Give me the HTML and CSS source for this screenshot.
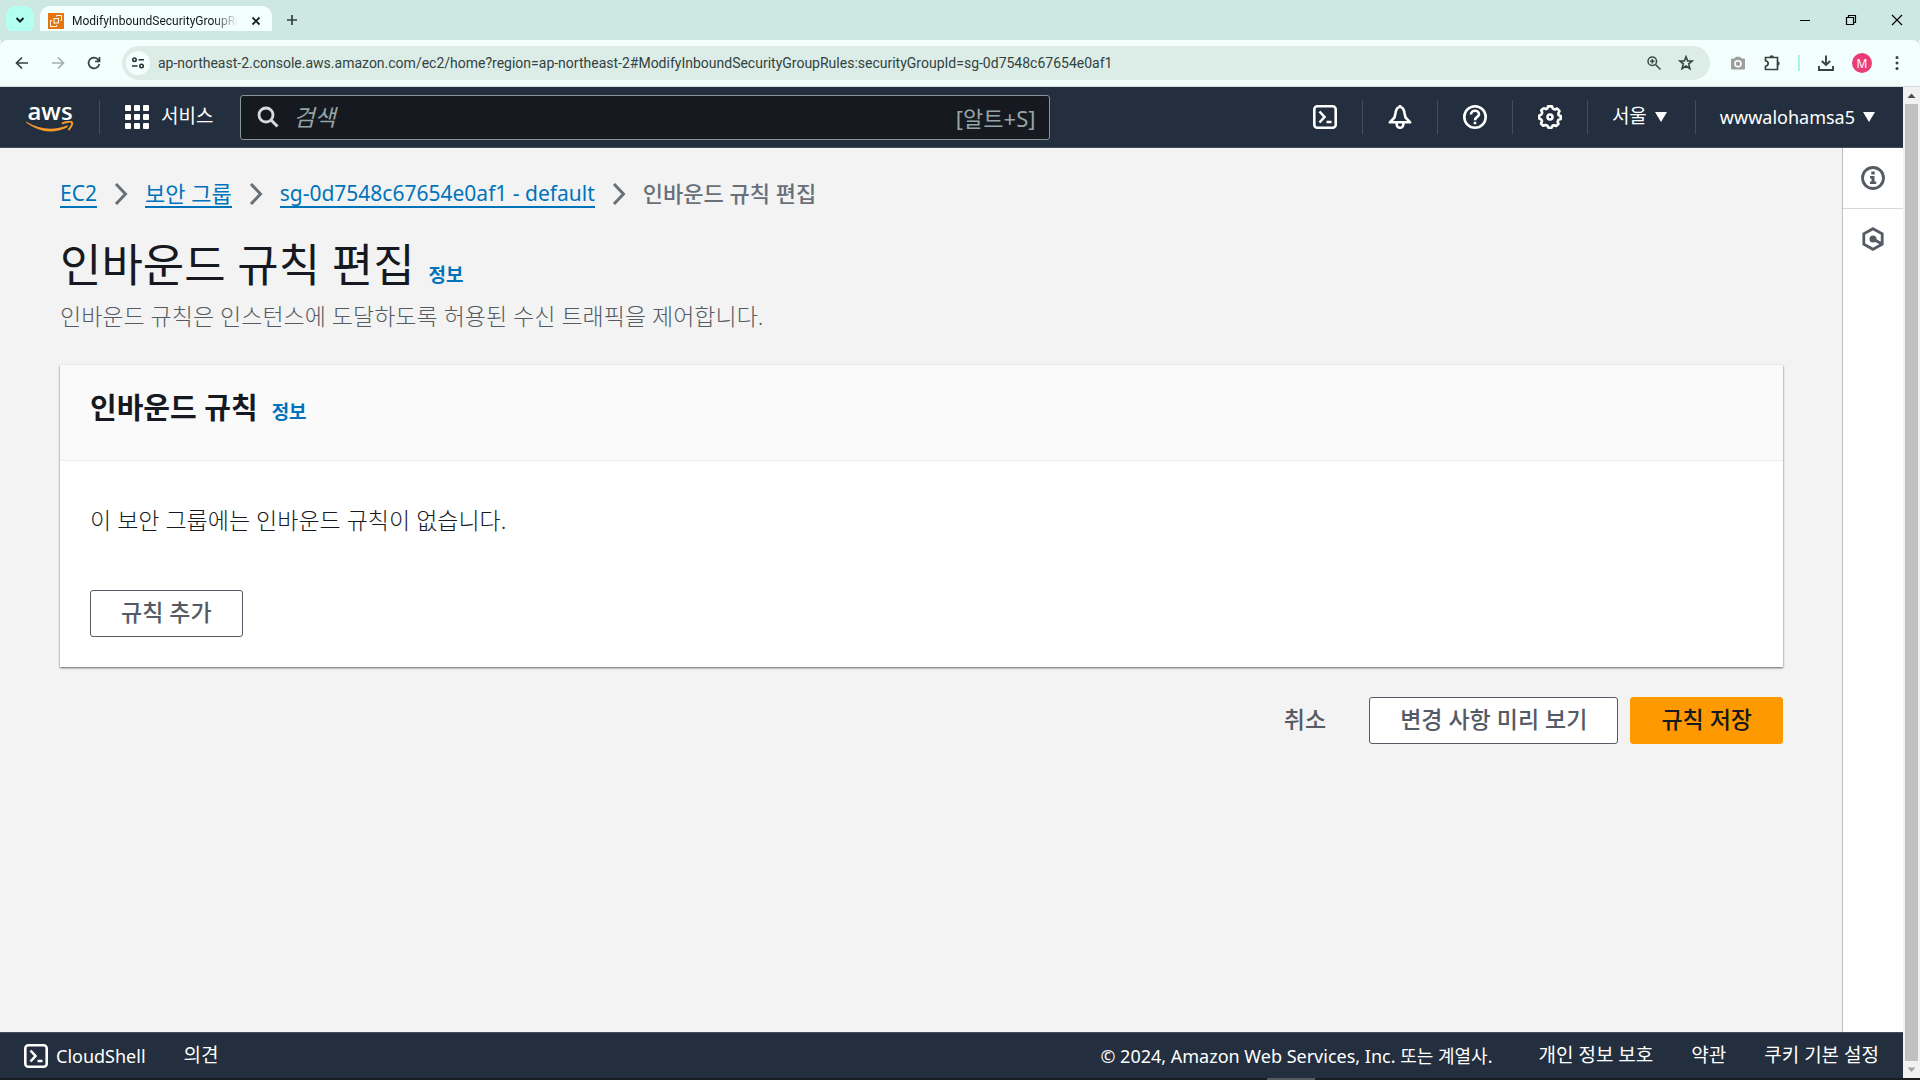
FILE: index.html
```html
<!DOCTYPE html>
<html lang="ko">
<head>
    <meta charset="UTF-8">
    <meta name="viewport" content="width=device-width, initial-scale=1.0">
    <title>ModifyInboundSecurityGroupRules</title>
    <link rel="stylesheet" href="styles.css">
</head>
<body>

    <!-- Browser tabs -->
    <div class="tab-strip">
        <button class="tab-search" aria-label="Search tabs">
            <svg width="10" height="10" viewBox="0 0 10 10"><path d="M1.5 3 5 6.5 8.500 3" fill="none" stroke="#14221f" stroke-width="2"/></svg>
        </button>
        <div class="tab">
            <svg width="16" height="16" viewBox="0 0 16 16">
                <rect width="16" height="16" fill="#e8740c"/>
                <g fill="none" stroke="#fff">
                    <rect x="6" y="5.500" width="4.500" height="4.500"/>
                    <path d="M8.500 3.500V2.500H13.500V7.500H12.500M4 7.500H2.500V13.500H8.500V12"/>
                </g>
            </svg>
            <span class="tab-title">ModifyInboundSecurityGroupRules</span>
            <button class="tab-close" aria-label="Close tab">
                <svg width="10" height="10" viewBox="0 0 10 10"><path d="M1.500 1.500 8.500 8.500M8.500 1.500 1.500 8.500" stroke="#14221f" stroke-width="1.800"/></svg>
            </button>
        </div>
        <button class="new-tab" aria-label="New tab">
            <svg width="12" height="12" viewBox="0 0 12 12"><path d="M6 1V11M1 6H11" stroke="#2f403c" stroke-width="1.700"/></svg>
        </button>
        <div class="window-buttons">
            <button aria-label="Minimize"><svg width="12" height="12" viewBox="0 0 12 12"><path d="M1 6.500H11" stroke="#000"/></svg></button>
            <button aria-label="Restore"><svg width="12" height="12" viewBox="0 0 12 12"><path d="M1.500 3.500H8.500V10.500H1.500ZM3.500 3.500V1.500H10.500V8.500H8.500" fill="none" stroke="#000" stroke-width="1.200"/></svg></button>
            <button aria-label="Close"><svg width="12" height="12" viewBox="0 0 12 12"><path d="M1 1 11 11M11 1 1 11" stroke="#000" stroke-width="1.200"/></svg></button>
        </div>
    </div>

    <!-- Browser toolbar -->
    <div class="toolbar">
        <button aria-label="Back"><svg width="16" height="16" viewBox="0 0 16 16"><path d="M14 8H3M8 2.500 2.500 8 8 13.500" fill="none" stroke="#34433f" stroke-width="1.700"/></svg></button>
        <button aria-label="Forward"><svg width="16" height="16" viewBox="0 0 16 16"><path d="M2 8H13M8 2.500 13.500 8 8 13.500" fill="none" stroke="#a3b0ac" stroke-width="1.700"/></svg></button>
        <button aria-label="Reload"><svg width="16" height="16" viewBox="0 0 16 16"><path d="M13.300 9A5.400 5.400 0 1 1 12.300 4.700L13.300 6M13.500 2V6.300H9.200" fill="none" stroke="#34433f" stroke-width="1.700"/></svg></button>
        <div class="address">
            <button class="site-info" aria-label="Site information">
                <svg width="14" height="14" viewBox="0 0 14 14"><g fill="none" stroke="#25322f" stroke-width="1.600"><circle cx="3.500" cy="3.700" r="1.700"/><path d="M7.500 3.700H13M1 10H6.500"/><circle cx="10.500" cy="10" r="1.700"/></g></svg>
            </button>
            <input class="url" type="text" aria-label="Address" value="ap-northeast-2.console.aws.amazon.com/ec2/home?region=ap-northeast-2#ModifyInboundSecurityGroupRules:securityGroupId=sg-0d7548c67654e0af1">
            <button aria-label="Zoom"><svg width="16" height="16" viewBox="0 0 16 16"><g fill="none" stroke="#3c4b47" stroke-width="1.500"><circle cx="6.300" cy="6.300" r="4.300"/><path d="M9.500 9.500 14.500 14.500M4 6.300H8.600M6.300 4V8.600"/></g></svg></button>
            <button aria-label="Bookmark"><svg width="16" height="16" viewBox="0 0 16 16"><path d="M8 1.800 9.700 6H14.200L10.700 8.900 11.900 13.600 8 11 4.100 13.600 5.300 8.900 1.800 6H6.300Z" fill="none" stroke="#34433f" stroke-width="1.600"/></svg></button>
        </div>
        <div class="toolbar-right">
            <button aria-label="Screenshot"><svg width="16" height="16" viewBox="0 0 16 16"><path d="M1 4.500Q1 3.500 2 3.500H4.200L6 1.700H10L11.800 3.500H14Q15 3.500 15 4.500V13.500Q15 14.500 14 14.500H2Q1 14.500 1 13.500Z" fill="#9b9f9e"/><circle cx="8" cy="8.700" r="3" fill="none" stroke="#fff" stroke-width="1.600"/></svg></button>
            <button aria-label="Extensions"><svg width="18" height="18" viewBox="0 0 18 18"><path d="M2.500 3.500H14.500V15.500H2.500V12.200Q5.200 11.500 5.200 9.500T2.500 6.800Z" fill="none" stroke="#34433f" stroke-width="1.700"/><path d="M6.500 3.500a2.200 2.200 0 0 1 4.400 0ZM14.500 7.300a2.200 2.200 0 0 1 0 4.400Z" fill="#34433f"/></svg></button>
            <span class="divider-mint"></span>
            <button aria-label="Downloads"><svg width="18" height="18" viewBox="0 0 18 18"><path d="M9 1.500V10.500M4.800 7 9 11 13.200 7M2 12V16H16V12" fill="none" stroke="#34433f" stroke-width="1.900"/></svg></button>
            <button class="avatar" aria-label="Profile">M</button>
            <button aria-label="Menu"><svg width="16" height="16" viewBox="0 0 16 16" fill="#34433f"><circle cx="8" cy="2.500" r="1.500"/><circle cx="8" cy="8" r="1.500"/><circle cx="8" cy="13.500" r="1.500"/></svg></button>
        </div>
    </div>

    <div class="viewport">
        <div class="page">

            <header class="aws-header">
                <a class="aws-logo" href="#" aria-label="AWS">
                    <span class="aws-word">aws</span>
                    <svg width="48" height="12" viewBox="0 0 48 12"><path d="M0 .5Q21 13 42 4L41 6.500Q20 16.500 0 1.500Z" fill="#f79a28"/><path d="M36 2.500Q45-.5 46 1.500T42.500 9" fill="none" stroke="#f79a28" stroke-width="2"/></svg>
                </a>
                <button class="services">
                    <svg width="24" height="24" viewBox="0 0 24 24" fill="#fff"><rect width="6" height="6" rx="1"/><rect x="9" width="6" height="6" rx="1"/><rect x="18" width="6" height="6" rx="1"/><rect y="9" width="6" height="6" rx="1"/><rect x="9" y="9" width="6" height="6" rx="1"/><rect x="18" y="9" width="6" height="6" rx="1"/><rect y="18" width="6" height="6" rx="1"/><rect x="9" y="18" width="6" height="6" rx="1"/><rect x="18" y="18" width="6" height="6" rx="1"/></svg>
                    <span class="ko">서비스</span>
                </button>
                <div class="search">
                    <svg width="22" height="22" viewBox="0 0 22 22"><circle cx="9" cy="9" r="7" fill="none" stroke="#d5dbdb" stroke-width="2.800"/><path d="M14 14 20.500 20.500" stroke="#d5dbdb" stroke-width="3"/></svg>
                    <input class="search-input" type="search" placeholder="검색" aria-label="검색">
                    <span class="shortcut">[알트+S]</span>
                </div>
                <nav class="header-tools">
                    <button aria-label="CloudShell"><svg width="24" height="24" viewBox="0 0 24 24" fill="none" stroke="#fff" stroke-width="2.600"><rect x="1.300" y="1.300" width="21.400" height="21.400" rx="3"/><path d="M6.500 6.500 11.500 12 6.500 17.500M13.500 17H18.500"/></svg></button>
                    <button aria-label="알림"><svg width="24" height="24" viewBox="0 0 24 24" fill="none" stroke="#fff" stroke-width="2.600" stroke-linejoin="round"><path d="M12 2C9 2 8 5 7.500 8L6.500 12.500 1.800 17.300H22.200L17.500 12.500 16.500 8C16 5 15 2 12 2ZM12 0V2M8.700 18V19.500A3.300 3.300 0 0 0 15.300 19.500V18"/></svg></button>
                    <button aria-label="도움말"><svg width="24" height="24" viewBox="0 0 24 24" fill="none" stroke="#fff" stroke-width="2.600"><circle cx="12" cy="12" r="10.700"/><path d="M8 9.500C8 4.500 16 4.700 16 9.300 16 12 12 11.800 12 15.200M12 16.700V19.300"/></svg></button>
                    <button aria-label="설정"><svg width="24" height="24" viewBox="0 0 24 24" fill="none" stroke="#fff" stroke-width="2.600" stroke-linejoin="round"><path d="M10 1.400H14L14.800 3.600 17 4.500 19.200 3.500 21.500 6.200 20.300 8.500 20.600 10.200 22.700 11V14L20.500 14.800 19.600 16.800 20.500 19 18 21 15.800 20.200 14.500 20.800 13.600 22.700H10.400L9.500 20.800 7.500 20 5.200 20.800 3 18.500 4 16.300 3.400 14.700 1.300 13.600V10.400L3.400 9.600 4.200 7.500 3.200 5.300 5.800 3.200 7.800 4.200 9.200 3.500Z"/><circle cx="12" cy="12" r="2.500"/></svg></button>
                    <button class="menu-button"><span class="ko">서울</span> <svg width="12" height="10" viewBox="0 0 12 10"><path d="M0 0H12L6 10Z" fill="#fff"/></svg></button>
                    <button class="menu-button">wwwalohamsa5 <svg width="12" height="10" viewBox="0 0 12 10"><path d="M0 0H12L6 10Z" fill="#fff"/></svg></button>
                </nav>
            </header>

            <div class="layout">
                <main class="content">
                    <nav class="breadcrumb">
                        <a href="#">EC2</a>
                        <svg width="14" height="24" viewBox="0 0 14 24"><path d="M2 2 11.500 12 2 22" fill="none" stroke="#687078" stroke-width="3"/></svg>
                        <a class="group" href="#">보안 그룹</a>
                        <svg width="14" height="24" viewBox="0 0 14 24"><path d="M2 2 11.500 12 2 22" fill="none" stroke="#687078" stroke-width="3"/></svg>
                        <a href="#">sg-0d7548c67654e0af1 - default</a>
                        <svg width="14" height="24" viewBox="0 0 14 24"><path d="M2 2 11.500 12 2 22" fill="none" stroke="#687078" stroke-width="3"/></svg>
                        <span class="current">인바운드 규칙 편집</span>
                    </nav>

                    <div class="title-row">
                        <h1>인바운드 규칙 편집</h1>
                        <a class="info" href="#">정보</a>
                    </div>
                    <p class="description">인바운드 규칙은 인스턴스에 도달하도록 허용된 수신 트래픽을 제어합니다.</p>

                    <section class="card">
                        <div class="card-header">
                            <h2>인바운드 규칙</h2>
                            <a class="info" href="#">정보</a>
                        </div>
                        <div class="card-body">
                            <p>이 보안 그룹에는 인바운드 규칙이 없습니다.</p>
                            <button class="btn">규칙 추가</button>
                        </div>
                    </section>

                    <div class="actions">
                        <button class="btn btn-link">취소</button>
                        <button class="btn">변경 사항 미리 보기</button>
                        <button class="btn btn-primary">규칙 저장</button>
                    </div>
                </main>

                <aside class="side-panel">
                    <button aria-label="정보"><svg width="24" height="24" viewBox="0 0 24 24"><circle cx="12" cy="12" r="10.500" fill="none" stroke="#545b64" stroke-width="2.800"/><path d="M10.300 5.500H13.700V8.500H10.300ZM9 10H13.500V15.500H15.200V18H9V15.500H10.500V12.500H9Z" fill="#545b64"/></svg></button>
                    <button aria-label="튜토리얼"><svg width="24" height="24" viewBox="0 0 24 24"><path d="M12 1.700 21.200 6.800V17.200L12 22.300 2.800 17.200V6.800Z" fill="none" stroke="#545b64" stroke-width="2.800"/><circle cx="12" cy="12" r="3.500" fill="#545b64"/><path d="M12 12 20.500 16.800" stroke="#545b64" stroke-width="3"/></svg></button>
                </aside>
            </div>

            <footer class="aws-footer">
                <button class="cloudshell">
                    <svg width="24" height="24" viewBox="0 0 24 24" fill="none" stroke="#fff" stroke-width="2.600"><rect x="1.300" y="1.300" width="21.400" height="21.400" rx="3"/><path d="M6.500 6.500 11.500 12 6.500 17.500M13.500 17H18.500"/></svg>
                    CloudShell
                </button>
                <a class="ko" href="#">의견</a>
                <span class="copyright">© 2024, Amazon Web Services, Inc. 또는 계열사.</span>
                <a class="ko" href="#">개인 정보 보호</a>
                <a class="ko" href="#">약관</a>
                <a class="ko" href="#">쿠키 기본 설정</a>
            </footer>
        </div>

        <div class="scrollbar">
            <svg width="17" height="17" viewBox="0 0 17 17"><path d="M4.500 11 8.500 6.500 12.500 11Z" fill="#505050"/></svg>
            <div class="thumb"></div>
            <svg width="17" height="17" viewBox="0 0 17 17"><path d="M4.500 6.500 8.500 11 12.500 6.500Z" fill="#a3a3a3"/></svg>
        </div>
    </div>

    <div class="taskbar"><span class="taskbar-item"></span></div>

</body>
</html>
```
FILE: styles.css
```css
* {
    box-sizing: border-box;
}
body {
    margin: 0;
    min-height: 100vh;
    display: flex;
    flex-direction: column;
    font-family: "Noto Sans", "Noto Sans CJK KR", sans-serif;
    font-size: 18px;
    color: #16191f;
    background: #f3f3f3;
}
button,
input {
    font: inherit;
    color: inherit;
    border: none;
    background: none;
    padding: 0;
}
button {
    cursor: pointer;
    display: flex;
    align-items: center;
    justify-content: center;
}
svg {
    display: block;
    flex: none;
}
a {
    color: #0073bb;
    text-decoration: none;
}
h1,
h2,
p {
    margin: 0;
}
/* Hangul sits a little above the Latin text beside it */
.ko {
    padding-bottom: 4px;
    font-size: 19px;
}

/* Browser tabs */
.tab-strip {
    display: flex;
    align-items: flex-end;
    height: 40px;
    padding-left: 6px;
    background: #cde8e1;
}
.tab-search {
    width: 28px;
    height: 28px;
    margin-bottom: 6px;
    border-radius: 10px;
    background: #b3fff0;
}
.tab {
    display: flex;
    align-items: center;
    width: 232px;
    height: 34px;
    margin-left: 6px;
    padding: 0 10px 4px 8px;
    border-radius: 10px 10px 0 0;
    background: #f3fffc;
}
.tab-title {
    flex: 1;
    margin-left: 8px;
    overflow: hidden;
    white-space: nowrap;
    font-family: Roboto, sans-serif;
    font-size: 12px;
    -webkit-mask-image: linear-gradient(to right, #000 85%, transparent);
    mask-image: linear-gradient(to right, #000 85%, transparent);
}
.tab-close {
    width: 12px;
    margin-left: 12px;
}
.new-tab {
    width: 28px;
    height: 28px;
    margin: 0 0 6px 6px;
}
.window-buttons {
    display: flex;
    height: 40px;
    margin-left: auto;
}
.window-buttons button {
    width: 46px;
}

/* Browser toolbar */
.toolbar {
    display: flex;
    align-items: center;
    gap: 20px;
    height: 47px;
    padding: 0 15px 0 14px;
    border-bottom: 1px solid #cfdedb;
    border-radius: 8px 8px 0 0;
    background: #f3fffc;
    box-shadow: 0 -10px 0 -1px #cde8e1;
}
.address {
    flex: 1;
    display: flex;
    align-items: center;
    gap: 16px;
    height: 34px;
    padding: 0 16px 0 4px;
    border-radius: 17px;
    background: #dcede8;
}
.site-info {
    width: 24px;
    height: 24px;
    border-radius: 50%;
    background: #f3fffc;
}
.url {
    flex: 1;
    margin-left: -8px;
    font-family: Roboto, sans-serif;
    font-size: 14px;
    color: #33423e;
}
.toolbar-right {
    display: flex;
    align-items: center;
    gap: 17px;
}
.divider-mint {
    width: 2px;
    height: 16px;
    background: #a5f5e6;
}
.avatar {
    width: 20px;
    height: 20px;
    border-radius: 50%;
    font-size: 12px;
    color: #fff;
    background: #ea3d78;
}

/* Page area beside the scrollbar */
.viewport {
    flex: 1;
    display: flex;
}
.page {
    flex: 1;
    display: flex;
    flex-direction: column;
}
.scrollbar {
    display: flex;
    flex-direction: column;
    align-items: center;
    width: 17px;
    background: #f1f1f1;
}
.thumb {
    flex: 1;
    width: 13px;
    background: #c1c1c1;
}

/* AWS header */
.aws-header {
    display: flex;
    align-items: center;
    height: 61px;
    padding-left: 26px;
    border-bottom: 1px solid #414d5c;
    color: #fff;
    background: #232f3e;
}
.aws-logo {
    display: flex;
    flex-direction: column;
    align-items: center;
    color: #fff;
}
.aws-word {
    font-family: "Open Sans", sans-serif;
    font-weight: 600;
    font-size: 24px;
    line-height: 20px;
}
.services {
    gap: 12px;
    height: 34px;
    margin-left: 25px;
    padding: 0 27px 0 25px;
    border-left: 1px solid #414d5c;
}
.search {
    flex: 0 1 810px;
    display: flex;
    align-items: center;
    gap: 14px;
    height: 45px;
    padding: 0 14px 0 16px;
    border: 1px solid #879596;
    border-radius: 3px;
    background: #16191f;
}
.search-input {
    flex: 1;
    font-size: 23px;
    outline: none;
}
.search-input::placeholder {
    font-style: italic;
    color: #95a5a6;
}
.shortcut {
    font-size: 22px;
    color: #95a5a6;
}
.header-tools {
    display: flex;
    align-items: center;
    margin-left: auto;
}
.header-tools button {
    height: 34px;
    padding: 0 25px;
}
.header-tools button + button {
    border-left: 1px solid #414d5c;
}
.header-tools .menu-button {
    gap: 8px;
    padding: 0 28px 0 24px;
}

/* Content */
.layout {
    flex: 1;
    display: flex;
}
.content {
    flex: 1;
    padding: 29px 59px 29px 60px;
}
.breadcrumb {
    display: flex;
    align-items: center;
    gap: 17px;
    height: 34px;
    font-size: 21px;
}
.breadcrumb a {
    line-height: 26px;
    border-bottom: 2px solid #0073bb;
}
.breadcrumb .group {
    font-size: 22px;
}
.current {
    padding-bottom: 4px;
    font-weight: 500;
    font-size: 22px;
    color: #687078;
}
.title-row {
    display: flex;
    align-items: baseline;
    gap: 14px;
    margin-top: 20px;
}
h1 {
    font-weight: 400;
    font-size: 45px;
    line-height: 68px;
}
.info {
    font-weight: 700;
    font-size: 19px;
}
.description {
    font-weight: 300;
    font-size: 23px;
    line-height: 34px;
    color: #545b64;
}
.card {
    margin-top: 32px;
    background: #fff;
    box-shadow: 0 1px 2px #00000099;
}
.card-header {
    display: flex;
    align-items: baseline;
    gap: 14px;
    height: 96px;
    padding: 23px 30px;
    border-bottom: 1px solid #eaeded;
    background: #fafafa;
}
h2 {
    font-weight: 700;
    font-size: 29px;
    line-height: 40px;
}
.card-body {
    padding: 42px 30px 30px;
}
.card-body p {
    font-weight: 300;
    font-size: 23px;
    line-height: 34px;
    margin-bottom: 53px;
}
.btn {
    height: 47px;
    padding: 0 30px 6px;
    border: 1px solid #545b64;
    border-radius: 3px;
    font-weight: 500;
    font-size: 23px;
    color: #545b64;
    background: #fff;
}
.btn-link {
    border-color: transparent;
    background: none;
}
.btn-primary {
    border-color: #ff9900;
    color: #16191f;
    background: #ff9900;
}
.actions {
    display: flex;
    justify-content: flex-end;
    gap: 12px;
    margin-top: 30px;
}

/* Side panel */
.side-panel {
    width: 61px;
    border-left: 1px solid #b9c0c4;
    background: #fff;
}
.side-panel button {
    width: 100%;
    height: 60px;
}
.side-panel button + button {
    border-top: 1px solid #d5dbdb;
}

/* Footer */
.aws-footer {
    display: flex;
    align-items: center;
    gap: 38px;
    height: 46px;
    padding: 0 24px;
    border-top: 1px solid #414d5c;
    color: #fff;
    background: #232f3e;
}
.aws-footer a {
    color: #fff;
}
.cloudshell {
    gap: 8px;
}
.copyright {
    margin-left: auto;
    padding: 0 8px 2px 0;
}
.taskbar {
    height: 2px;
    background: #1a1e20;
}
.taskbar-item {
    display: block;
    width: 48px;
    height: 2px;
    margin-left: 66%;
    background: #555a5e;
}
```
